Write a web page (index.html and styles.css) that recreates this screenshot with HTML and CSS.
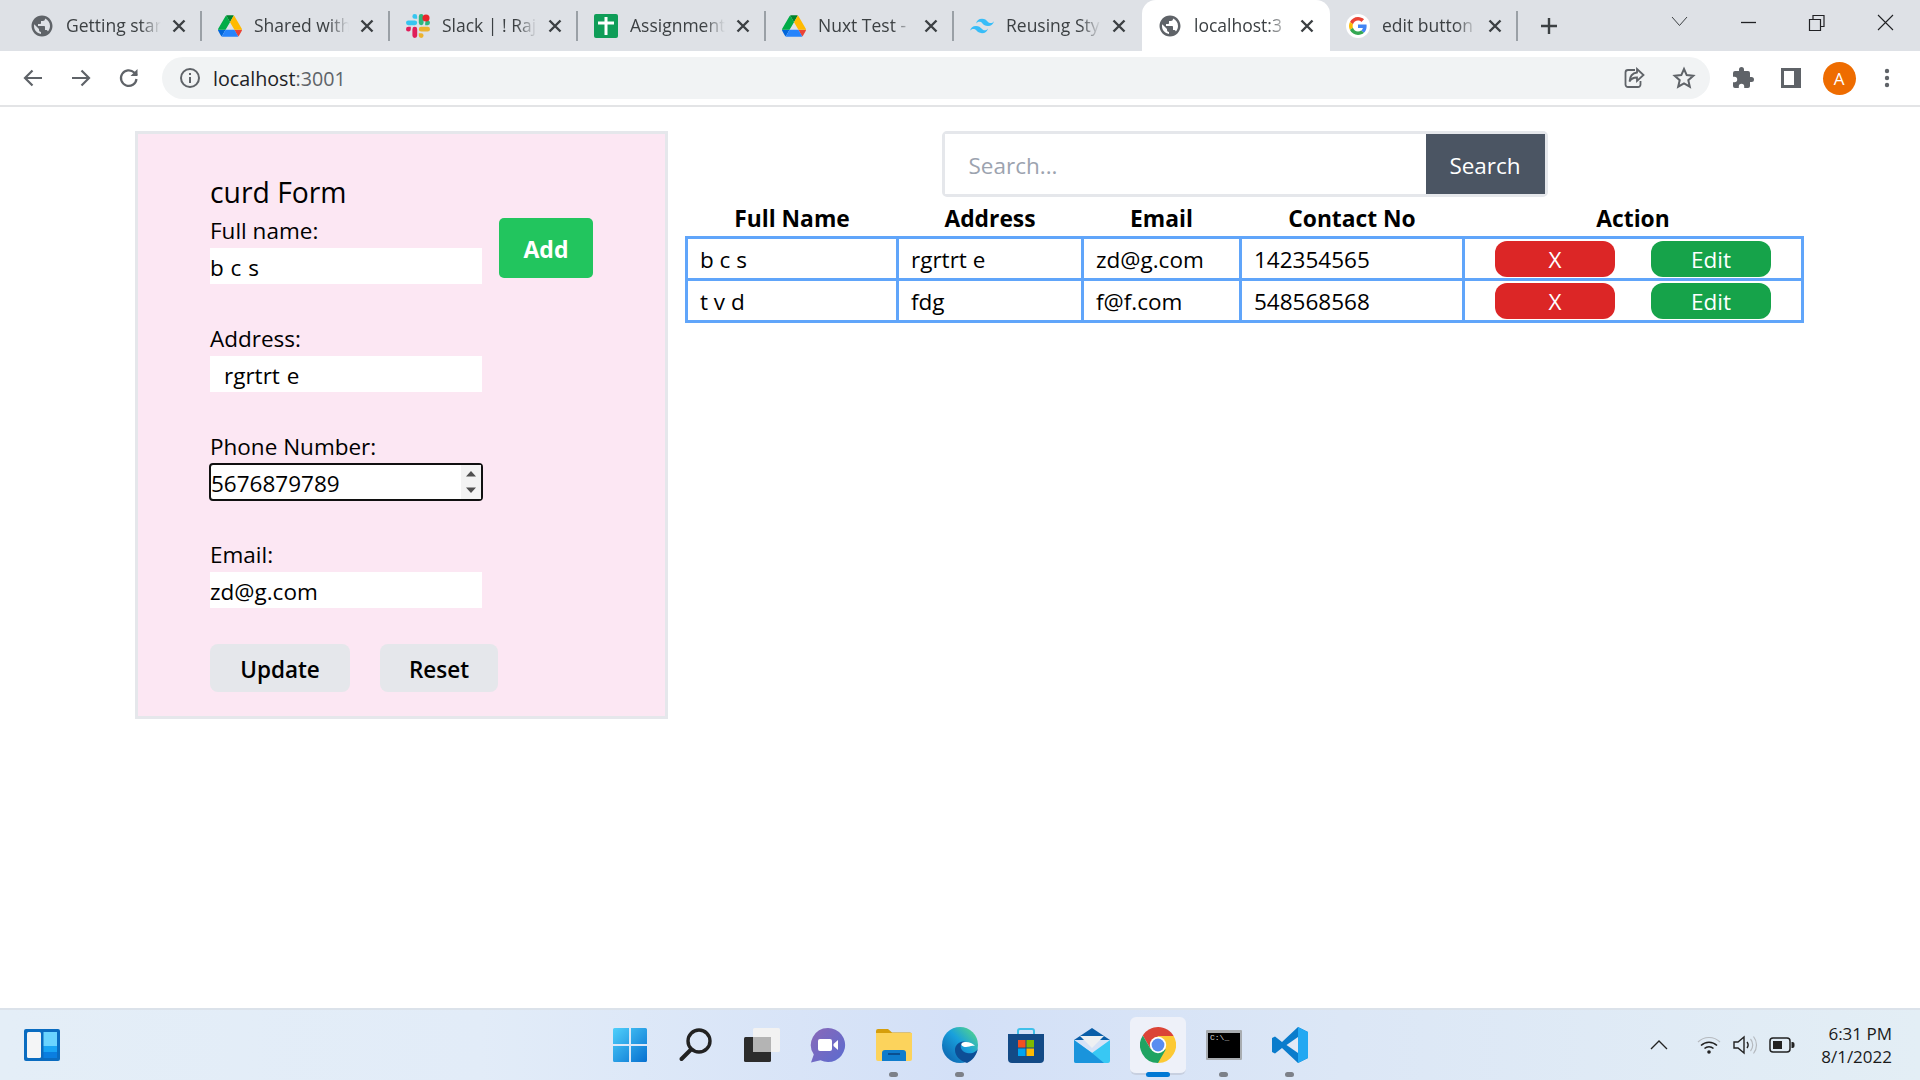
FILE: index.html
```html
<!DOCTYPE html>
<html lang="en">
<head>
<meta charset="utf-8">
<title>localhost:3001</title>
<link rel="stylesheet" href="styles.css">
</head>
<body>
<svg class="defs" width="0" height="0" aria-hidden="true">
  <symbol id="globe" viewBox="0 0 24 24"><path fill="#5f6368" d="M12 1.500C6.200 1.500 1.500 6.200 1.500 12S6.200 22.500 12 22.500 22.500 17.800 22.500 12 17.800 1.500 12 1.500zm-1 18.400c-3.950-.49-7-3.850-7-7.930 0-.62.08-1.210.21-1.790L9 15v1c0 1.100.9 2 2 2v1.900zm6.900-2.510c-.26-.81-1-1.390-1.900-1.390h-1v-3c0-.55-.45-1-1-1H8v-2h2c.55 0 1-.45 1-1V7h2c1.100 0 2-.9 2-2v-.41c2.930 1.190 5 4.060 5 7.410 0 2.080-.8 3.970-2.100 5.390z"/></symbol>
  <symbol id="drive" viewBox="0 0 87.300 78">
    <path d="m6.600 66.850 3.850 6.650c.8 1.400 1.950 2.500 3.300 3.300l13.750-23.800h-27.500c0 1.550.4 3.100 1.200 4.500z" fill="#0066da"/>
    <path d="m43.650 25-13.750-23.800c-1.350.8-2.500 1.900-3.300 3.300l-25.400 44a9.060 9.060 0 0 0 -1.200 4.500h27.500z" fill="#00ac47"/>
    <path d="m73.550 76.800c1.350-.8 2.500-1.900 3.300-3.300l1.600-2.750 7.650-13.250c.8-1.400 1.200-2.950 1.200-4.500h-27.502l5.852 11.500z" fill="#ea4335"/>
    <path d="m43.650 25 13.750-23.800c-1.350-.8-2.900-1.200-4.500-1.200h-18.500c-1.600 0-3.150.45-4.500 1.200z" fill="#00832d"/>
    <path d="m59.800 53h-32.300l-13.750 23.800c1.350.8 2.900 1.200 4.500 1.200h50.800c1.600 0 3.150-.45 4.500-1.200z" fill="#2684fc"/>
    <path d="m73.400 26.500-12.700-22c-.8-1.400-1.950-2.500-3.300-3.300l-13.750 23.800 16.150 28h27.450c0-1.550-.4-3.100-1.200-4.500z" fill="#ffba00"/>
  </symbol>
  <symbol id="slack" viewBox="0 0 54 54">
    <path fill="#36C5F0" d="M19.700 0a5.400 5.400 0 1 0 0 10.800h5.400V5.400A5.400 5.400 0 0 0 19.700 0zm0 14.400H5.400a5.400 5.400 0 1 0 0 10.800h14.300a5.400 5.400 0 1 0 0-10.800z"/>
    <path fill="#2EB67D" d="M54 19.800a5.400 5.400 0 1 0-10.800 0v5.400h5.400a5.400 5.400 0 0 0 5.400-5.400zm-14.400 0V5.400a5.400 5.400 0 1 0-10.800 0v14.400a5.400 5.400 0 1 0 10.800 0z"/>
    <path fill="#ECB22E" d="M34.200 54a5.400 5.400 0 1 0 0-10.800h-5.400v5.400a5.400 5.400 0 0 0 5.400 5.400zm0-14.400h14.400a5.400 5.400 0 1 0 0-10.800H34.200a5.400 5.400 0 1 0 0 10.800z"/>
    <path fill="#E01E5A" d="M0 34.200a5.400 5.400 0 1 0 10.800 0v-5.400H5.400A5.400 5.400 0 0 0 0 34.200zm14.400 0v14.400a5.400 5.400 0 1 0 10.800 0V34.200a5.400 5.400 0 1 0-10.800 0z"/>
    <circle cx="45" cy="9" r="8" fill="#e8262b"/>
  </symbol>
  <symbol id="sheet" viewBox="0 0 24 24"><rect width="24" height="24" rx="2" fill="#0f9d58"/><path fill="#fff" d="M10.500 3h3v4.500H20v3h-6.500V21h-3V10.500H4v-3h6.500z"/></symbol>
  <symbol id="wind" viewBox="2 5 20 14"><path fill="#38bdf8" d="M12 6c-2.670 0-4.330 1.330-5 4 1-1.330 2.170-1.830 3.500-1.500.76.19 1.310.74 1.910 1.350.98 1 2.120 2.150 4.590 2.150 2.670 0 4.330-1.330 5-4-1 1.330-2.170 1.830-3.500 1.500-.76-.19-1.300-.74-1.910-1.350C15.610 7.150 14.470 6 12 6zM7 12c-2.670 0-4.330 1.330-5 4 1-1.330 2.170-1.830 3.500-1.500.76.19 1.300.74 1.910 1.350C8.390 16.850 9.530 18 12 18c2.670 0 4.330-1.330 5-4-1 1.330-2.170 1.830-3.500 1.500-.76-.19-1.300-.74-1.910-1.350C10.610 13.150 9.470 12 7 12z"/></symbol>
  <symbol id="gg" viewBox="0 0 48 48">
    <circle cx="24" cy="24" r="24" fill="#fff"/>
    <g transform="translate(6 6) scale(.75)">
    <path fill="#EA4335" d="M24 9.500c3.540 0 6.710 1.220 9.210 3.600l6.850-6.850C35.900 2.380 30.470 0 24 0 14.620 0 6.510 5.380 2.560 13.220l7.980 6.190C12.430 13.720 17.740 9.500 24 9.500z"/>
    <path fill="#4285F4" d="M46.980 24.550c0-1.570-.15-3.090-.38-4.550H24v9.020h12.940c-.58 2.960-2.260 5.480-4.780 7.180l7.730 6c4.510-4.180 7.090-10.360 7.090-17.650z"/>
    <path fill="#FBBC05" d="M10.530 28.590c-.48-1.450-.76-2.990-.76-4.590s.27-3.140.76-4.590l-7.980-6.190C.92 16.460 0 20.120 0 24c0 3.880.92 7.540 2.560 10.780l7.970-6.190z"/>
    <path fill="#34A853" d="M24 48c6.480 0 11.930-2.130 15.890-5.810l-7.730-6c-2.150 1.450-4.920 2.300-8.160 2.300-6.260 0-11.570-4.220-13.470-9.910l-7.980 6.190C6.510 42.620 14.620 48 24 48z"/>
    </g>
  </symbol>
  <symbol id="x" viewBox="0 0 16 16"><path d="M2.500 2.500l11 11M13.500 2.500l-11 11" stroke="#3c4043" stroke-width="2.400" fill="none"/></symbol>
</svg>

<div class="tabstrip">
  <div class="tab sep"><svg class="favicon"><use href="#globe"/></svg><span class="title">Getting star</span><svg class="close"><use href="#x"/></svg></div>
  <div class="tab sep"><svg class="favicon"><use href="#drive"/></svg><span class="title">Shared with</span><svg class="close"><use href="#x"/></svg></div>
  <div class="tab sep"><svg class="favicon"><use href="#slack"/></svg><span class="title">Slack | ! Raj</span><svg class="close"><use href="#x"/></svg></div>
  <div class="tab sep"><svg class="favicon"><use href="#sheet"/></svg><span class="title">Assignment</span><svg class="close"><use href="#x"/></svg></div>
  <div class="tab sep"><svg class="favicon"><use href="#drive"/></svg><span class="title">Nuxt Test -</span><svg class="close"><use href="#x"/></svg></div>
  <div class="tab"><svg class="favicon"><use href="#wind"/></svg><span class="title">Reusing Sty</span><svg class="close"><use href="#x"/></svg></div>
  <div class="tab active"><svg class="favicon"><use href="#globe"/></svg><span class="title">localhost:3</span><svg class="close"><use href="#x"/></svg></div>
  <div class="tab sep"><svg class="favicon"><use href="#gg"/></svg><span class="title">edit button</span><svg class="close"><use href="#x"/></svg></div>
  <svg class="newtab" viewBox="0 0 20 20"><path d="M10 2v16M2 10h16" stroke="#3c4043" stroke-width="2.400" fill="none"/></svg>
  <div class="wincontrols">
    <svg class="winbtn chev" viewBox="0 0 68 44"><path d="M27 17l7.500 8.500L42 17" stroke="#3c4043" stroke-width="1" fill="none"/></svg>
    <svg class="winbtn" viewBox="0 0 68 44"><path d="M27 22.500h15" stroke="#202124" stroke-width="1.300" fill="none"/></svg>
    <svg class="winbtn restore" viewBox="0 0 68 44"><path d="M27.500 19.500h11v11h-11zM31 19v-3.500h11v11h-3.500" stroke="#202124" stroke-width="1.200" fill="none"/></svg>
    <svg class="winbtn" viewBox="0 0 68 44"><path d="M26 15l15 15M41 15L26 30" stroke="#202124" stroke-width="1.100" fill="none"/></svg>
  </div>
</div>

<div class="toolbar">
  <svg class="navbtn" viewBox="0 0 24 24"><path d="M21 12H4M11.500 4.500L4 12l7.500 7.500" stroke="#5f6368" stroke-width="2.200" fill="none"/></svg>
  <svg class="navbtn" viewBox="0 0 24 24"><path d="M3 12h17M12.500 4.500L20 12l-7.500 7.500" stroke="#5f6368" stroke-width="2.200" fill="none"/></svg>
  <svg class="navbtn" viewBox="0 0 24 24"><path d="M19.500 13a7.800 7.800 0 1 1-2.300-6.500L20 9" stroke="#5f6368" stroke-width="2.200" fill="none"/><path d="M20.500 3v7h-7z" fill="#5f6368"/></svg>
  <div class="omnibox">
    <svg class="omni-icon" viewBox="0 0 24 24"><circle cx="12" cy="12" r="9" stroke="#5f6368" stroke-width="2" fill="none"/><path d="M12 11v6M12 7v2" stroke="#5f6368" stroke-width="2" fill="none"/></svg>
    <span class="url">localhost<span class="url-dim">:3001</span></span>
    <svg class="omni-icon share" viewBox="0 0 24 24"><path d="M13 4H6a2.500 2.500 0 0 0-2.500 2.500v12A2.500 2.500 0 0 0 6 21h10a2.500 2.500 0 0 0 2.500-2.500V15" stroke="#5f6368" stroke-width="1.800" fill="none"/><path d="M15 3l6.500 6-6.500 6v-3.500c-3.500 0-6 1-7.500 4 .3-5 3-8.500 7.500-9z" stroke="#5f6368" stroke-width="1.800" fill="none"/></svg>
    <svg class="omni-icon star" viewBox="0 0 24 24"><path d="M12 3l2.700 6.100 6.600.7-5 4.400 1.500 6.500L12 17.300l-5.800 3.400 1.500-6.500-5-4.400 6.600-.7z" stroke="#5f6368" stroke-width="2" fill="none"/></svg>
  </div>
  <svg class="navbtn ext" viewBox="0 0 24 24"><path fill="#5f6368" d="M20.500 11H19V7a2 2 0 0 0-2-2h-4V3.500a2.500 2.500 0 0 0-5 0V5H4a2 2 0 0 0-2 2v3.800h1.500a2.700 2.700 0 0 1 0 5.400H2V20a2 2 0 0 0 2 2h3.800v-1.500a2.700 2.700 0 0 1 5.400 0V22H17a2 2 0 0 0 2-2v-4h1.500a2.500 2.500 0 0 0 0-5z"/></svg>
  <svg class="navbtn" viewBox="0 0 24 24"><path fill-rule="evenodd" fill="#5f6368" d="M2 2h20v20H2zM5 5v14h10V5z"/></svg>
  <div class="avatar-cell"><span class="avatar">A</span></div>
  <svg class="navbtn" viewBox="0 0 24 24"><circle cx="12" cy="5" r="2.200" fill="#5f6368"/><circle cx="12" cy="12" r="2.200" fill="#5f6368"/><circle cx="12" cy="19" r="2.200" fill="#5f6368"/></svg>
</div>

<main class="page">
  <form class="panel">
    <h1 class="form-title">curd Form</h1>
    <div class="form-row">
      <div class="fields">
        <div class="field"><label class="label">Full name:</label><input class="input" type="text" value="b c s"></div>
        <div class="field"><label class="label">Address:</label><input class="input indented" type="text" value="rgrtrt e"></div>
        <div class="field"><label class="label">Phone Number:</label>
          <div class="number-box"><input class="number-input" type="text" value="5676879789">
            <span class="spinner"><svg class="spin-arrows" viewBox="0 0 12 28"><path d="M6 3l5 5.500H1zM6 25l-5-5.500h10z" fill="#505050"/></svg></span>
          </div>
        </div>
        <div class="field"><label class="label">Email:</label><input class="input" type="text" value="zd@g.com"></div>
      </div>
      <button class="btn-add" type="button">Add</button>
    </div>
    <div class="form-actions">
      <button class="btn-grey btn-update" type="button">Update</button>
      <button class="btn-grey btn-reset" type="button">Reset</button>
    </div>
  </form>

  <section class="list">
    <div class="searchbox">
      <input class="search-input" type="text" placeholder="Search...">
      <button class="search-btn" type="button">Search</button>
    </div>
    <table class="grid">
      <colgroup><col class="c1"><col class="c2"><col class="c3"><col class="c4"><col class="c5"></colgroup>
      <thead><tr><th>Full Name</th><th>Address</th><th>Email</th><th>Contact No</th><th>Action</th></tr></thead>
      <tbody>
        <tr><td>b c s</td><td>rgrtrt e</td><td>zd@g.com</td><td>142354565</td>
          <td class="actions"><div class="action-row"><button class="pill red" type="button">X</button><button class="pill green" type="button">Edit</button></div></td></tr>
        <tr><td>t v d</td><td>fdg</td><td>f@f.com</td><td>548568568</td>
          <td class="actions"><div class="action-row"><button class="pill red" type="button">X</button><button class="pill green" type="button">Edit</button></div></td></tr>
      </tbody>
    </table>
  </section>
</main>

<footer class="taskbar">
  <div class="tb-left">
    <svg class="widgets" viewBox="0 0 36 32"><rect width="36" height="32" rx="2" fill="#0a6cc0"/><rect x="3" y="3" width="14" height="26" rx="1.500" fill="#f4f5f6"/><rect x="19.500" y="3" width="13.500" height="14" fill="#6ad4ff"/><rect x="19.500" y="17" width="13.500" height="6" fill="#18a4f4"/><rect x="19.500" y="23" width="13.500" height="6" fill="#0a7ee0"/></svg>
  </div>
  <div class="tb-center">
    <div class="tb-item"><svg class="tb-icon" viewBox="0 0 36 36"><defs><linearGradient id="win" x1="0" y1="0" x2="1" y2="1"><stop offset="0" stop-color="#4fd0fb"/><stop offset="1" stop-color="#0670d0"/></linearGradient></defs><path fill="url(#win)" d="M1 2.500A1.500 1.500 0 0 1 2.500 1H17v16H1zM19 1h14.500A1.500 1.500 0 0 1 35 2.500V17H19zM1 19h16v16H2.500A1.500 1.500 0 0 1 1 33.500zM19 19h16v14.500a1.500 1.500 0 0 1-1.500 1.500H19z"/></svg></div>
    <div class="tb-item"><svg class="tb-icon" viewBox="0 0 36 36"><circle cx="21" cy="14" r="11" stroke="#222" stroke-width="3.400" fill="none"/><path d="M13 22.500L3.500 32" stroke="#222" stroke-width="4" stroke-linecap="round"/></svg></div>
    <div class="tb-item"><svg class="tb-icon" viewBox="0 0 36 36"><rect x="9" y="1" width="27" height="24" rx="1.500" fill="#f2f2f2"/><rect x="0" y="10" width="27" height="25" rx="1.500" fill="#2c2c2c"/><rect x="9" y="10" width="18" height="15" fill="#b4b4b4"/></svg></div>
    <div class="tb-item"><svg class="tb-icon" viewBox="0 0 36 36"><defs><linearGradient id="chat" x1="0" y1="0" x2="1" y2="1"><stop offset="0" stop-color="#8a68b8"/><stop offset="1" stop-color="#5a6cd0"/></linearGradient></defs><path fill="url(#chat)" d="M18 1a17 17 0 1 1-7.500 32.200L1 35.500l2.800-8A17 17 0 0 1 18 1z"/><rect x="8" y="12" width="14" height="12" rx="2" fill="#fff"/><path d="M23.500 17l4.500-4v10l-4.500-4z" fill="#fff"/></svg></div>
    <div class="tb-item dot"><svg class="tb-icon wide" viewBox="0 0 36 32"><path d="M0 2a2 2 0 0 1 2-2h10l4 3.500h18a2 2 0 0 1 2 2V10H0z" fill="#d69e0c"/><path d="M0 4h36v26a2 2 0 0 1-2 2H2a2 2 0 0 1-2-2z" fill="#fcd35c"/><path d="M6 32V24a3 3 0 0 1 3-3h18a3 3 0 0 1 3 3v8z" fill="#0f7ccc"/><rect x="12" y="24" width="12" height="2" fill="#0a4f90"/></svg></div>
    <div class="tb-item dot"><svg class="tb-icon" viewBox="0 0 36 36"><defs><linearGradient id="edge" x1="0" y1="1" x2="1" y2="0"><stop offset="0" stop-color="#0b5aa8"/><stop offset=".55" stop-color="#19a0dc"/><stop offset="1" stop-color="#5fe07a"/></linearGradient></defs><circle cx="18" cy="18" r="18" fill="url(#edge)"/><path d="M36 21c-1 4-6 6-11 5-5-1-7-5-6-8 .5-2 3-3 5-3-5-2-11 2-11 8 0 6 5 11 12 13 5-2 10-8 11-15z" fill="#0d4e96"/><path d="M20 16c3-2 10-1 13 3-4-1-6 1-9 1s-6-2-4-4z" fill="#fff"/></svg></div>
    <div class="tb-item"><svg class="tb-icon" viewBox="0 0 36 36"><path d="M10 8V4a2 2 0 0 1 2-2h12a2 2 0 0 1 2 2v4" stroke="#3fc0ea" stroke-width="2" fill="none"/><path d="M0 7h36v25a4 4 0 0 1-4 4H4a4 4 0 0 1-4-4z" fill="#134a86"/><rect x="10" y="13" width="7.500" height="7.500" fill="#f25022"/><rect x="18.500" y="13" width="7.500" height="7.500" fill="#7fba00"/><rect x="10" y="21.500" width="7.500" height="7.500" fill="#00a4ef"/><rect x="18.500" y="21.500" width="7.500" height="7.500" fill="#ffb900"/></svg></div>
    <div class="tb-item"><svg class="tb-icon" viewBox="0 0 36 36"><path d="M18 1L0 13h36z" fill="#0a5ea8"/><path d="M6 9h24L18 21z" fill="#eef0f2"/><path d="M0 13l18 13 18-13v21a2 2 0 0 1-2 2H2a2 2 0 0 1-2-2z" fill="#38c8f4"/><path d="M0 13l18 13 12 10H2a2 2 0 0 1-2-2z" fill="#1a94dc"/></svg></div>
    <div class="tb-item active-app"><span class="app-highlight"><svg class="tb-icon" viewBox="0 0 36 36"><path d="M18 18L33.600 9A18 18 0 0 0 2.800 8.400l7.800 13.500z" fill="#db4437"/><path d="M18 36a18 18 0 0 0 15.600-27H18l-7.400 12.900z" fill="#fcc934"/><path d="M2.800 8.400A18 18 0 0 0 18 36l7.800-13.500-15.200-.6z" fill="#1ea362"/><circle cx="18" cy="18" r="8.200" fill="#fff"/><circle cx="18" cy="18" r="6.400" fill="#5a8df0"/></svg></span></div>
    <div class="tb-item dot"><svg class="tb-icon" viewBox="0 0 36 30"><rect width="36" height="30" rx="1" fill="#a8acb0"/><rect x="2" y="3" width="32" height="25" fill="#000"/><text class="cmd-text" x="4" y="10">C:\_</text></svg></div>
    <div class="tb-item dot"><svg class="tb-icon" viewBox="0 0 36 36"><path d="M26 0l10 5v26l-10 5-16-15-7 5.500L0 25V11l3-1.500 7 5.500z" fill="#0a7ccc"/><path d="M26 0l10 5v26l-10 5z" fill="#23a8f2"/><path d="M26 10L14.500 18 26 26z" fill="#e1e9f6"/></svg></div>
  </div>
  <div class="tb-right">
    <svg class="tray chevup" viewBox="0 0 20 12"><path d="M2 10l8-8 8 8" stroke="#222" stroke-width="1.300" fill="none"/></svg>
    <svg class="tray wifi" viewBox="0 0 24 20"><path d="M1 7c6-6 16-6 22 0" stroke="#b5b9be" stroke-width="1.200" fill="none"/><path d="M4 10.500c4.500-4.500 11.500-4.500 16 0M7.500 13.500c2.500-2.500 6.500-2.500 9 0" stroke="#222" stroke-width="1.500" fill="none"/><circle cx="12" cy="17" r="1.800" fill="#222"/></svg>
    <svg class="tray vol" viewBox="0 0 26 22"><path d="M2 8h4l6-5v16l-6-5H2z" stroke="#222" stroke-width="1.400" fill="none"/><path d="M15 8c1.500 2 1.500 4 0 6" stroke="#222" stroke-width="1.400" fill="none"/><path d="M18.500 5c3 3.500 3 8.500 0 12M21.500 2.500c4 5 4 12 0 17" stroke="#b5b9be" stroke-width="1.200" fill="none"/></svg>
    <svg class="tray batt" viewBox="0 0 26 16"><rect x="1" y="1" width="20" height="14" rx="3" stroke="#222" stroke-width="1.500" fill="none"/><rect x="4" y="4" width="9" height="8" fill="#222"/><path d="M22.500 5h1a2 2 0 0 1 2 2v2a2 2 0 0 1-2 2h-1z" fill="#222"/></svg>
    <div class="clock"><span>6:31 PM</span><span>8/1/2022</span></div>
  </div>
</footer>
</body>
</html>
```

FILE: styles.css
```css
* { box-sizing: border-box; }
html, body { margin: 0; padding: 0; height: 100%; }
body {
  display: flex;
  flex-direction: column;
  height: 100vh;
  overflow: hidden;
  background: #fff;
  color: #000;
  font-family: "Open Sans", "Noto Sans", "Liberation Sans", sans-serif;
}
.defs { display: block; width: 0; height: 0; }

/* Browser tab strip */
.tabstrip {
  flex: 0 0 51px;
  min-width: 0;
  display: flex;
  align-items: stretch;
  padding-left: 14px;
  background: #dee1e6;
}
.tab {
  flex: 0 0 188px;
  width: 188px;
  min-width: 0;
  display: flex;
  align-items: center;
  padding: 0 13px 0 16px;
  color: #3c4043;
  font-size: 17.500px;
}
.tab.sep {
  background: linear-gradient(#9aa0a6, #9aa0a6) right 11px / 2px 30px no-repeat;
}
.tab.active {
  background: #fff;
  border-radius: 14px 14px 0 0;
}
.favicon { flex: 0 0 24px; width: 24px; height: 24px; margin-right: 12px; }
.title {
  flex: 1 1 0;
  min-width: 0;
  white-space: nowrap;
  padding-bottom: 1px;
  -webkit-mask-image: linear-gradient(to right, #000 78%, transparent 100%);
  mask-image: linear-gradient(to right, #000 78%, transparent 100%);
}
.close { flex: 0 0 16px; width: 16px; height: 16px; margin-left: 10px; margin-right: 2px; }
.newtab { flex: 0 0 20px; width: 20px; height: 20px; align-self: center; margin-left: 21px; }
.wincontrols { margin-left: auto; display: flex; align-self: flex-start; }
.winbtn { width: 68px; height: 44px; display: block; }
.winbtn.chev { margin-right: 1px; }
.winbtn.restore { margin-right: 2px; }

/* Toolbar */
.toolbar {
  flex: 0 0 56px;
  display: flex;
  align-items: center;
  padding: 0 9px 0;
  background: #fff;
  border-bottom: 2px solid #e3e4e6;
}
.navbtn { flex: 0 0 48px; width: 48px; height: 24px; }
.navbtn.ext { margin-left: 9px; }
.omnibox {
  flex: 1 1 0;
  height: 42px;
  margin-left: 9px;
  padding: 0 14px 0 16px;
  display: flex;
  align-items: center;
  background: #f1f3f4;
  border-radius: 21px;
}
.omni-icon { flex: 0 0 24px; width: 24px; height: 24px; }
.url { margin-left: 11px; font-size: 19.700px; color: #202124; }
.url-dim { color: #5f6368; }
.share { margin-left: auto; }
.star { margin-left: 26px; }
.avatar-cell { flex: 0 0 48px; display: flex; justify-content: center; }
.avatar {
  width: 33px;
  height: 33px;
  border-radius: 50%;
  background: #ee6c00;
  color: #fff;
  font-size: 17px;
  line-height: 33px;
  text-align: center;
}

/* Page */
.page {
  flex: 1 1 0;
  min-height: 0;
  display: flex;
  align-items: flex-start;
  gap: 17px;
  padding: 24px 0 0 135px;
}
.panel {
  flex: 0 0 auto;
  padding: 38px 72px 24px;
  background: #fce7f3;
  border: 3px solid #e5e7eb;
}
.form-title { margin: 0; font-size: 28.300px; line-height: 40px; font-weight: 400; }
.form-row { display: flex; align-items: flex-start; gap: 17px; }
.fields { width: 272px; }
.field { margin-bottom: 36px; }
.label { display: block; font-size: 22.500px; line-height: 35px; padding: 1px 0 0 0; }
.input, .number-input {
  display: block;
  width: 100%;
  height: 36px;
  padding: 2px 0 0 0;
  border: 0;
  background: #fff;
  color: #000;
  font: inherit;
  font-size: 22.500px;
  word-spacing: 1px;
  outline: 0;
}
.input.indented { padding-left: 14px; }
.number-box {
  display: flex;
  height: 38px;
  margin: -1px -1px;
  background: #fff;
  border: 2px solid #101010;
  border-radius: 4px;
}
.number-input { flex: 1 1 0; min-width: 0; height: 34px; background: transparent; }
.spinner { flex: 0 0 20px; display: flex; align-items: center; justify-content: center; background: #f3f3f3; }
.spin-arrows { width: 12px; height: 28px; }
.btn-add {
  flex: 0 0 94px;
  height: 60px;
  margin-top: 6px;
  padding: 1px 0 0;
  border: 0;
  border-radius: 5px;
  background: #22c55e;
  color: #fff;
  font: inherit;
  font-size: 23px;
  font-weight: 700;
}
.form-actions { display: flex; gap: 30px; }
.btn-grey {
  height: 48px;
  padding: 2px 0 0;
  border: 0;
  border-radius: 8px;
  background: #e5e7eb;
  color: #000;
  font: inherit;
  font-size: 22.500px;
  font-weight: 600;
}
.btn-update { width: 140px; }
.btn-reset { width: 118px; }

/* List */
.list { display: flex; flex-direction: column; align-items: center; }
.searchbox {
  display: flex;
  width: 606px;
  height: 66px;
  border: 3px solid #e5e7eb;
  border-radius: 5px;
}
.search-input {
  flex: 1 1 0;
  min-width: 0;
  padding: 2px 24px 0;
  border: 0;
  outline: 0;
  background: #fff;
  font: inherit;
  font-size: 22.500px;
  color: #000;
}
.search-input::placeholder { color: #9ca3af; opacity: 1; }
.search-btn {
  flex: 0 0 119px;
  padding: 2px 0 0;
  border: 0;
  background: #4b5563;
  color: #fff;
  font: inherit;
  font-size: 22.500px;
}
.grid {
  width: 1119px;
  table-layout: fixed;
  border-collapse: collapse;
  font-size: 22.500px;
}
.c1 { width: 211px; }
.c2 { width: 185px; }
.c3 { width: 158px; }
.c4 { width: 223px; }
.c5 { width: 339px; }
.grid th {
  height: 39px;
  padding: 4px 0 0;
  font-size: 22.800px;
  font-weight: 700;
  line-height: 35px;
  text-align: center;
}
.grid td {
  height: 42px;
  padding: 2px 0 0 12px;
  border: 3px solid #60a5fa;
  line-height: 36px;
}
.grid td.actions { padding: 0; }
.action-row { display: flex; justify-content: center; gap: 36px; }
.pill {
  flex: 0 0 120px;
  height: 36px;
  padding: 1px 0 0;
  border: 0;
  border-radius: 12px;
  color: #fff;
  font: inherit;
  font-size: 22.500px;
  line-height: 35px;
}
.red { background: #dc2626; }
.green { background: #16a34a; }

/* Windows taskbar */
.taskbar {
  flex: 0 0 72px;
  display: grid;
  grid-template-columns: 1fr auto 1fr;
  align-items: center;
  background: linear-gradient(to right, #e4eef7 0%, #e2ecf8 25%, #d3e0f7 50%, #dce7f6 70%, #e3eef5 100%);
  border-top: 2px solid #dbe2ea;
}
.tb-left { padding-left: 24px; display: flex; }
.widgets { width: 36px; height: 32px; display: block; }
.tb-center { display: flex; height: 70px; }
.tb-item {
  position: relative;
  flex: 0 0 66px;
  height: 70px;
  display: flex;
  align-items: center;
  justify-content: center;
}
.tb-item.dot::after {
  content: "";
  position: absolute;
  left: 28px;
  bottom: 3px;
  width: 9px;
  height: 5px;
  border-radius: 3px;
  background: #7c8088;
}
.tb-icon { width: 36px; height: 36px; display: block; }
.app-highlight {
  align-self: flex-start;
  width: 56px;
  height: 58px;
  display: flex;
  align-items: flex-start;
  justify-content: center;
  padding-top: 10px;
  background: #eef1f9;
  border-radius: 6px;
  border-bottom: 2px solid #c8d0e0;
  margin-top: 7px;
}
.tb-item.active-app::after {
  content: "";
  position: absolute;
  left: 21px;
  bottom: 3px;
  width: 24px;
  height: 5px;
  border-radius: 3px;
  background: #0078d4;
}
.cmd-text { font-family: "Liberation Mono", monospace; font-size: 8px; fill: #d8d8d8; }
.tb-right { display: flex; align-items: center; justify-content: flex-end; padding-right: 28px; }
.tray { display: block; }
.chevup { width: 20px; height: 12px; margin-right: 28px; }
.wifi { width: 24px; height: 20px; margin-right: 11px; }
.vol { width: 26px; height: 22px; margin-right: 11px; }
.batt { width: 26px; height: 16px; margin-right: 26px; }
.clock {
  display: flex;
  flex-direction: column;
  align-items: flex-end;
  font-size: 17px;
  line-height: 23px;
  color: #1a1a1a;
}
```
